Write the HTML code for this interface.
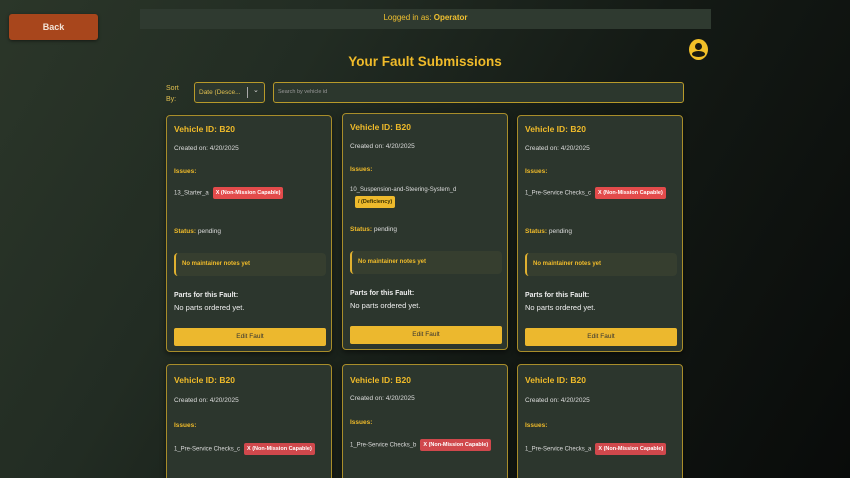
<!DOCTYPE html>
<html style="width:850px;height:478px;overflow:hidden;background:#0c100d"><head><meta charset="utf-8"><style>
*{margin:0;padding:0;box-sizing:border-box}
body{width:850px;height:478px;overflow:hidden;font-family:"Liberation Sans",sans-serif;background:linear-gradient(120deg,#2b3629 0%,#222c23 30%,#141a15 60%,#090b0a 100%);position:relative;color:#e8e8e0}
.a{position:absolute}
.back{left:9px;top:14px;width:89px;height:26px;background:#a8461c;border-radius:3px;color:#f3e4d8;font-weight:bold;font-size:9px;text-align:center;line-height:26px;box-shadow:0 1px 3px rgba(0,0,0,.5)}
.bar{left:140px;top:9px;width:571px;height:20px;background:#2f3a30;color:#f0c030;font-size:8px;text-align:center;line-height:18px}
h1{position:absolute;left:0;width:850px;top:54px;text-align:center;font-size:13.5px;color:#f0bb2a;font-weight:bold}
.av{left:689px;top:39px;width:19px;height:21px;border-radius:50%;background:#f2c028;overflow:hidden}
.card{position:absolute;width:166px;height:237px;background:#2c362d;border:1px solid #a88d2a;border-radius:4px;box-shadow:0 2px 6px rgba(0,0,0,.5);overflow:hidden}
.card>*{position:absolute;left:7px;white-space:nowrap}
.vid{top:8px;font-size:8.5px;font-weight:bold;color:#f0bb2a}
.cr{top:29px;font-size:6.5px;color:#ddd}
.is{top:52px;font-size:6.5px;font-weight:bold;color:#f0bb2a}
.row{top:71px;font-size:6px;color:#ddd}
.bd{display:inline-block;background:#e34b4b;color:#fff;font-weight:bold;font-size:5.5px;padding:3px 3px;border-radius:2px;margin-left:4px;vertical-align:middle}
.bd.y{background:#eeba2c;color:#3a3000;margin-left:5px;margin-top:3px}
.st{top:112px;font-size:6.5px;color:#ddd}
.st b{color:#f0bb2a}
.nt{top:137px;width:152px;height:23px;background:#363e2f;border-left:2px solid #e0b030;border-radius:4px;color:#f0bb2a;font-weight:bold;font-size:6px;padding-left:6px;line-height:23px}
.pl{top:176px;font-size:7px;font-weight:bold;color:#eee}
.pn{top:187px;font-size:7.5px;color:#eee}
.btn{top:212px;width:152px;height:18px;background:#ecb82e;border-radius:2px;color:#333;font-size:6.5px;text-align:center;line-height:18px}
.sel{left:194px;top:82px;width:71px;height:21px;border:1px solid #b89a2a;border-radius:3px;background:#2c372d;color:#e0c050;font-size:6.5px;line-height:19px;padding-left:4px}
.srch{left:273px;top:82px;width:411px;height:21px;border:1px solid #b89a2a;border-radius:3px;background:#2c372d;color:#999;font-size:5.5px;line-height:19px;padding-left:4px}
</style></head><body>
<div class="a back">Back</div>
<div class="a bar">Logged in as: <b>Operator</b></div>
<h1>Your Fault Submissions</h1>
<div class="a av"><div class="a" style="left:6px;top:4px;width:7px;height:7px;border-radius:50%;background:#1a1a10"></div><div class="a" style="left:3px;top:12px;width:13px;height:6px;border-radius:50%;background:#1a1a10"></div></div>
<div class="a" style="left:166px;top:83px;font-size:7px;color:#e0c050;line-height:11px">Sort<br>By:</div>
<div class="a sel">Date (Desce...<span class="a" style="left:52px;top:4px;width:1px;height:11px;background:#aaa"></span><span class="a" style="left:58px;top:-2px;font-size:7px;color:#ddd">&#8964;</span></div>
<div class="a srch">Search by vehicle id</div>

<div class="card" style="left:166px;top:115px"><div class="vid">Vehicle ID: B20</div><div class="cr">Created on: 4/20/2025</div><div class="is">Issues:</div><div class="row">13_Starter_a<span class="bd">X (Non-Mission Capable)</span></div><div class="st"><b>Status:</b> pending</div><div class="nt">No maintainer notes yet</div><div class="pl">Parts for this Fault:</div><div class="pn">No parts ordered yet.</div><div class="btn">Edit Fault</div></div>
<div class="card" style="left:342px;top:113px"><div class="vid">Vehicle ID: B20</div><div class="cr">Created on: 4/20/2025</div><div class="is">Issues:</div><div class="row" style="top:73px">10_Suspension-and-Steering-System_d<br><span class="bd y">/ (Deficiency)</span></div><div class="st"><b>Status:</b> pending</div><div class="nt">No maintainer notes yet</div><div class="pl">Parts for this Fault:</div><div class="pn">No parts ordered yet.</div><div class="btn">Edit Fault</div></div>
<div class="card" style="left:517px;top:115px"><div class="vid">Vehicle ID: B20</div><div class="cr">Created on: 4/20/2025</div><div class="is">Issues:</div><div class="row">1_Pre-Service Checks_c<span class="bd">X (Non-Mission Capable)</span></div><div class="st"><b>Status:</b> pending</div><div class="nt">No maintainer notes yet</div><div class="pl">Parts for this Fault:</div><div class="pn">No parts ordered yet.</div><div class="btn">Edit Fault</div></div>

<div class="card" style="left:166px;top:364px;height:120px"><div class="vid" style="top:10px">Vehicle ID: B20</div><div class="cr" style="top:32px">Created on: 4/20/2025</div><div class="is" style="top:57px">Issues:</div><div class="row" style="top:78px">1_Pre-Service Checks_c<span class="bd" style="background:#d0484c">X (Non-Mission Capable)</span></div></div>
<div class="card" style="left:342px;top:364px;height:120px"><div class="vid" style="top:10px">Vehicle ID: B20</div><div class="cr" style="top:30px">Created on: 4/20/2025</div><div class="is" style="top:54px">Issues:</div><div class="row" style="top:74px">1_Pre-Service Checks_b<span class="bd" style="background:#d0484c">X (Non-Mission Capable)</span></div></div>
<div class="card" style="left:517px;top:364px;height:120px"><div class="vid" style="top:10px">Vehicle ID: B20</div><div class="cr" style="top:32px">Created on: 4/20/2025</div><div class="is" style="top:57px">Issues:</div><div class="row" style="top:78px">1_Pre-Service Checks_a<span class="bd" style="background:#d0484c">X (Non-Mission Capable)</span></div></div>
</body></html>
